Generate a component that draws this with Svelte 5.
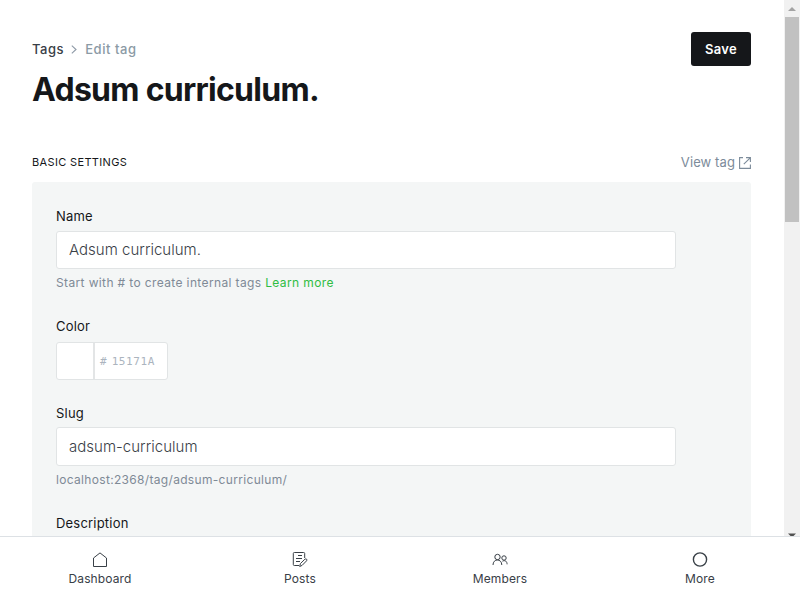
<script>
  const navItems = ['Dashboard', 'Posts', 'Members', 'More'];
  let name = $state('Adsum curriculum.');
  let slug = $state('adsum-curriculum');
  let color = $state('');
</script>

<div class="app">
  <div class="viewport">
    <main>
      <header>
        <div class="heading">
          <div class="breadcrumb">
            <a href="#tags">Tags</a>
            <svg width="6" height="9" viewBox="0 0 6 9"><path d="M.8 .7 5 4.5.8 8.3" fill="none" stroke="#8d99a6" stroke-width="1.1" /></svg>
            <span>Edit tag</span>
          </div>
          <h1>{name}</h1>
        </div>
        <button>Save</button>
      </header>

      <div class="section-head">
        <h4>Basic settings</h4>
        <a class="view" href="#view">
          <span>View tag</span>
          <svg width="12" height="12" viewBox="0 0 12 12" fill="none" stroke="#7c8b9a" stroke-width="1.1">
            <path d="M4 .6H.6v10.8h10.8V7.5M4.8 7.2 11.2.8M7 .6h4.4V5" />
          </svg>
        </a>
      </div>

      <section>
        <div class="field">
          <label for="name">Name</label>
          <input id="name" type="text" bind:value={name} />
          <p>Start with # to create internal tags <a href="#learn">Learn more</a></p>
        </div>
        <div class="field color">
          <label for="color">Color</label>
          <div class="color-box">
            <div class="swatch"></div>
            <span>#</span>
            <input id="color" type="text" placeholder="15171A" bind:value={color} />
          </div>
        </div>
        <div class="field slug">
          <label for="slug">Slug</label>
          <input id="slug" type="text" bind:value={slug} />
          <p>localhost:2368/tag/{slug}/</p>
        </div>
        <div class="field">
          <label for="description">Description</label>
          <textarea id="description"></textarea>
        </div>
      </section>
    </main>
    <div class="scrollbar">
      <svg width="16" height="17" viewBox="0 0 16 17"><path d="M4 11 8 7l4 4z" fill="#a3a3a3" /></svg>
      <div class="thumb"></div>
      <svg class="down" width="16" height="4" viewBox="0 0 16 4"><path d="M4 1.5h8L8 5.5z" fill="#505050" /></svg>
    </div>
  </div>

  <nav>
    {#each navItems as item}
      <a href="#{item}">
        <svg width="16" height="16" viewBox="0 0 16 16" fill="none" stroke="#394047">
          {#if item === 'Dashboard'}
            <path d="M1.5 14.5V6L8 .9 14.5 6v8.5z" />
          {:else if item === 'Posts'}
            <path d="M7 13.5H2.3a1 1 0 0 1-1-1v-11a1 1 0 0 1 1-1h9.4a1 1 0 0 1 1 1V6M6 3.5h4M4 6.5h6M4 9.5h4" />
            <path d="m7.7 14.5.7-2.9 4.5-4.4c1.2-1 2.7.4 1.7 1.6l-4.5 4.6z" />
          {:else if item === 'Members'}
            <circle cx="5.5" cy="5" r="2.7" />
            <circle cx="12" cy="6" r="2.2" />
            <path d="M1 13c0-6.7 8.8-6.7 8.8 0M10.5 9.2c2.7-1.5 4.6.4 4.6 3.1" />
          {:else}
            <circle cx="8" cy="7.5" r="6.6" stroke-width="1.4" />
          {/if}
        </svg>
        <span>{item}</span>
      </a>
    {/each}
  </nav>
</div>

<style>
  :global(body) { margin: 0; overflow: hidden; }
  * { box-sizing: border-box; }
  .app { display: flex; flex-direction: column; width: 800px; height: 600px; overflow: hidden; background: #fff; color: #15171a; font-family: Inter, 'Liberation Sans', sans-serif; }
  a { text-decoration: none; }
  .viewport { display: flex; height: 536px; overflow: hidden; }
  main { width: 784px; padding: 32px 33px 0 32px; }
  header { display: flex; justify-content: space-between; height: 119px; }
  .breadcrumb { display: flex; align-items: center; height: 20px; margin-top: 7px; font-size: 13px; font-weight: 500; letter-spacing: .55px; color: #8b9aa5; }
  .breadcrumb a { color: #394047; }
  .breadcrumb svg { margin: 1px 8px 0 7px; }
  h1 { margin: 10px 0 0; font-size: 32px; line-height: 42px; font-weight: 700; letter-spacing: -.72px; }
  button { width: 60px; height: 34px; padding: 0; border: 0; border-radius: 3px; background: #15171a; color: #fff; font: 600 13px Inter, sans-serif; letter-spacing: .3px; }
  .section-head { display: flex; align-items: center; justify-content: space-between; height: 22px; }
  h4 { margin: 0; font-size: 11px; font-weight: 400; letter-spacing: .35px; text-transform: uppercase; }
  .view { display: flex; align-items: center; gap: 4px; color: #7c8b9a; font-size: 13px; letter-spacing: .1px; }
  .view svg { margin-top: 1px; }
  section { height: 700px; margin-top: 9px; padding: 24px; border-radius: 3px; background: #f4f6f6; }
  .field { height: 110px; width: 620px; }
  .field.color { height: 87px; }
  .color label { height: 26px; }
  label { display: block; height: 25px; font-size: 13px; line-height: 21px; letter-spacing: .2px; }
  .slug label { height: 24px; }
  .field > input, textarea { display: block; width: 620px; height: 38px; padding: 0 12px 1px; border: 1px solid #e1e4e5; border-radius: 3px; background: #fff; color: #394047; font: 300 15px Inter, sans-serif; letter-spacing: .02px; outline: 0; }
  .slug > input { height: 39px; }
  p { margin: 4px 0 0; font-size: 12px; line-height: 20px; letter-spacing: .37px; color: #7f8a96; }
  .slug p { letter-spacing: .32px; }
  p a { color: #30bd43; }
  .color-box { display: flex; align-items: center; width: 112px; height: 38px; border: 1px solid #e1e4e5; border-radius: 3px; background: #fff; font: 11px 'DejaVu Sans Mono', monospace; color: #abb4be; overflow: hidden; }
  .swatch { width: 38px; height: 36px; margin-right: 5px; border-right: 2px solid #e3e5e6; flex: none; }
  .color-box input { width: 55px; padding: 0; margin-left: 5px; border: 0; outline: 0; background: none; font: inherit; color: inherit; letter-spacing: .6px; }
  .color-box input::placeholder { color: #abb4be; opacity: 1; }
  .scrollbar { display: flex; flex-direction: column; align-items: center; width: 16px; background: #f1f1f1; }
  .scrollbar svg { display: block; flex: none; }
  .thumb { width: 14px; height: 205px; background: #c1c1c1; }
  .scrollbar .down { margin-top: auto; }
  nav { display: flex; height: 64px; border-top: 1px solid #dde1e5; background: #fff; }
  nav a { display: flex; flex: 1; flex-direction: column; align-items: center; padding-top: 15px; color: #394047; font-size: 12px; line-height: 18px; letter-spacing: .12px; }
  nav svg { margin-bottom: 2px; }
</style>
